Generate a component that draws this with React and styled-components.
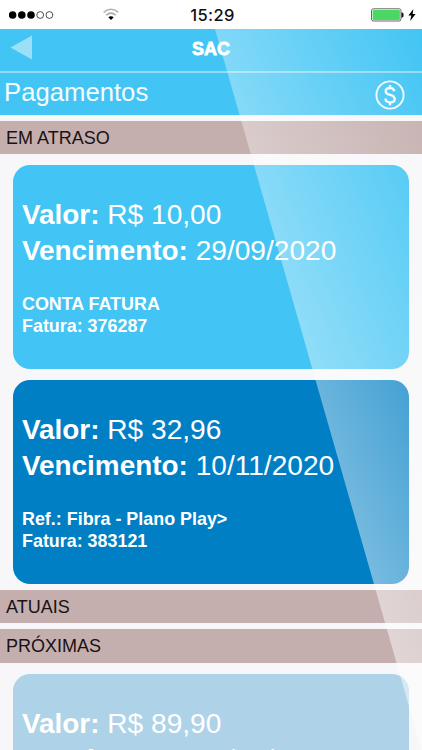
import React from 'react'
import styled, { createGlobalStyle } from 'styled-components'

const GlobalStyle = createGlobalStyle`
  body {
    margin: 0;
    background: #f7f7f9;
    font-family: 'Liberation Sans', Arial, sans-serif;
  }
`

const Screen = styled.div`
  position: relative;
  width: 422px;
  height: 750px;
  overflow: hidden;
  background: #f7f7f9;
`

const StatusBar = styled.div`
  display: grid;
  grid-template-columns: 1fr auto 1fr;
  align-items: center;
  height: 29px;
  padding: 0 6px 0 9px;
  box-sizing: border-box;
  background: #fff;
`

const StatusLeft = styled.div`
  display: flex;
  align-items: center;
  gap: 48px;
`

const StatusRight = styled.div`
  display: flex;
  align-items: center;
  justify-content: flex-end;
  gap: 4px;
`

const Clock = styled.div`
  font-family: Inter, sans-serif;
  font-size: 16.5px;
  font-weight: 500;
  letter-spacing: 0.35px;
  color: #111;
`

const NavBar = styled.div`
  display: grid;
  grid-template-columns: 1fr auto 1fr;
  height: 42px;
  padding: 0 10px;
  background: #42c5f4;
  border-bottom: 2px solid #8edcf8;
`

const NavTitle = styled.div`
  padding-top: 9px;
  font-size: 18px;
  line-height: 22px;
  font-weight: bold;
  color: #fff;
  -webkit-text-stroke: 0.8px #fff;
`

const PageHeader = styled.div`
  display: flex;
  justify-content: space-between;
  height: 42px;
  padding: 0 17px 0 4px;
  background: #42c5f4;
`

const PageTitle = styled.div`
  padding-top: 4px;
  font-size: 25.7px;
  line-height: 30px;
  color: #f4fcff;
`

const SectionBar = styled.div`
  height: 33.4px;
  margin-top: 5.8px;
  padding-left: 6px;
  font-size: 18px;
  line-height: 35px;
  color: #1a1213;
  background: #c4afae;
`

const CardList = styled.div`
  display: flex;
  flex-direction: column;
  gap: 11px;
  padding: 11px 13px 0;
`

const Card = styled.div`
  height: 204px;
  padding: 32px 9px 0;
  box-sizing: border-box;
  border-radius: 17px;
  color: #fff;
  background: ${props => props.$color};
`

const CardLine = styled.div`
  font-size: 28.1px;
  line-height: 36px;
  white-space: nowrap;

  b {
    font-size: 27.9px;
  }
`

const CardDetails = styled.div`
  margin-top: 23.4px;
  font-size: 17.9px;
  line-height: 22.2px;
  font-weight: bold;
  white-space: nowrap;
`

const BackIcon = styled.svg`
  display: block;
  margin-top: 6px;
`

const CoinIcon = styled.svg`
  display: block;
  margin-top: 7px;
`

const GlareLayer = styled.svg`
  position: absolute;
  top: 0;
  left: 0;
  pointer-events: none;
`

const Signal = () => (
  <svg width="46" height="10" viewBox="0 0 46 10">
    {[3.6, 12.8, 22].map(x => <circle key={x} cx={x} cy="5" r="3.8" fill="#000" />)}
    {[31.2, 40.4].map(x => (
      <circle key={x} cx={x} cy="5" r="3.4" fill="none" stroke="#222" strokeWidth="0.8" />
    ))}
  </svg>
)

const Wifi = () => (
  <svg width="16" height="13" viewBox="0 0 16 13" fill="none" strokeWidth="1.5">
    <path d="M0.6 4.4 Q8 -2 15.4 4.4" stroke="#b4b4b4" />
    <path d="M3.2 7.2 Q8 3 12.8 7.2" stroke="#aaa" />
    <path d="M5.3 9.2 Q8 7.1 10.7 9.2 L8 12Z" fill="#000" />
  </svg>
)

const Battery = () => (
  <svg width="33" height="14" viewBox="0 0 33 14">
    <rect x="0.5" y="0.8" width="29.5" height="12.2" rx="2" fill="#fff" stroke="#666" />
    <rect x="1.6" y="1.9" width="27.3" height="10" rx="1" fill="#4bd763" />
    <path d="M30.5 4.5 H31.3 Q32.5 4.5 32.5 6 V8 Q32.5 9.4 31.3 9.4 H30.5Z" fill="#111" />
  </svg>
)

const Bolt = () => (
  <svg width="8" height="12" viewBox="0 0 8 12">
    <path d="M5.4 0 L0.4 6.6 H3.3 L2.2 12 L7.6 5 H4.6Z" fill="#000" />
  </svg>
)

const Coin = () => (
  <CoinIcon width="30" height="30" viewBox="0 0 30 30" fill="none" stroke="#f4fcff" strokeWidth="1.9">
    <circle cx="15" cy="15" r="13.6" />
    <path
      d="M19.3 11.3 C18.8 8.9 17.2 8 15 8 C12.4 8 10.7 9.3 10.7 11.3 C10.7 13.4 12.2 14.2 15 14.9 C18 15.6 19.7 16.6 19.7 18.9 C19.7 21 17.9 22.3 15.2 22.3 C12.4 22.3 10.6 21 10.4 18.5 M15 4.9 V8.2 M15 22 V25.3"
      strokeWidth="2.4"
    />
  </CoinIcon>
)

const Glare = () => (
  <GlareLayer width="422" height="750" viewBox="0 0 422 750">
    <defs>
      <linearGradient id="glare" gradientUnits="userSpaceOnUse" x1="422" y1="29" x2="160" y2="144">
        <stop offset="0" stopColor="#fff" stopOpacity="0" />
        <stop offset="1" stopColor="#fff" stopOpacity="0.5" />
      </linearGradient>
    </defs>
    <path d="M215 29 H422 V750 H421.5Z" fill="url(#glare)" />
  </GlareLayer>
)

const Bill = ({ color, value, due, reference, invoice }) => (
  <Card $color={color}>
    <CardLine><b>Valor:</b> {value}</CardLine>
    <CardLine><b>Vencimento:</b> {due}</CardLine>
    {invoice && (
      <CardDetails>
        <div>{reference}</div>
        <div>Fatura: {invoice}</div>
      </CardDetails>
    )}
  </Card>
)

const App = () => (
  <Screen>
    <GlobalStyle />
    <StatusBar>
      <StatusLeft>
        <Signal />
        <Wifi />
      </StatusLeft>
      <Clock>15:29</Clock>
      <StatusRight>
        <Battery />
        <Bolt />
      </StatusRight>
    </StatusBar>
    <NavBar>
      <BackIcon width="22" height="25" viewBox="0 0 22 25">
        <path d="M0.5 12.5 L22 0.5 V24.5Z" fill="#9be0f9" />
      </BackIcon>
      <NavTitle>SAC</NavTitle>
    </NavBar>
    <PageHeader>
      <PageTitle>Pagamentos</PageTitle>
      <Coin />
    </PageHeader>
    <SectionBar>EM ATRASO</SectionBar>
    <CardList>
      <Bill
        color="#42c5f4"
        value="R$ 10,00"
        due="29/09/2020"
        reference="CONTA FATURA"
        invoice="376287"
      />
      <Bill
        color="#007fc4"
        value="R$ 32,96"
        due="10/11/2020"
        reference="Ref.: Fibra - Plano Play>"
        invoice="383121"
      />
    </CardList>
    <SectionBar>ATUAIS</SectionBar>
    <SectionBar>PRÓXIMAS</SectionBar>
    <CardList>
      <Bill color="#aed3e8" value="R$ 89,90" due="10/12/2020" />
    </CardList>
    <Glare />
  </Screen>
)

export default App
